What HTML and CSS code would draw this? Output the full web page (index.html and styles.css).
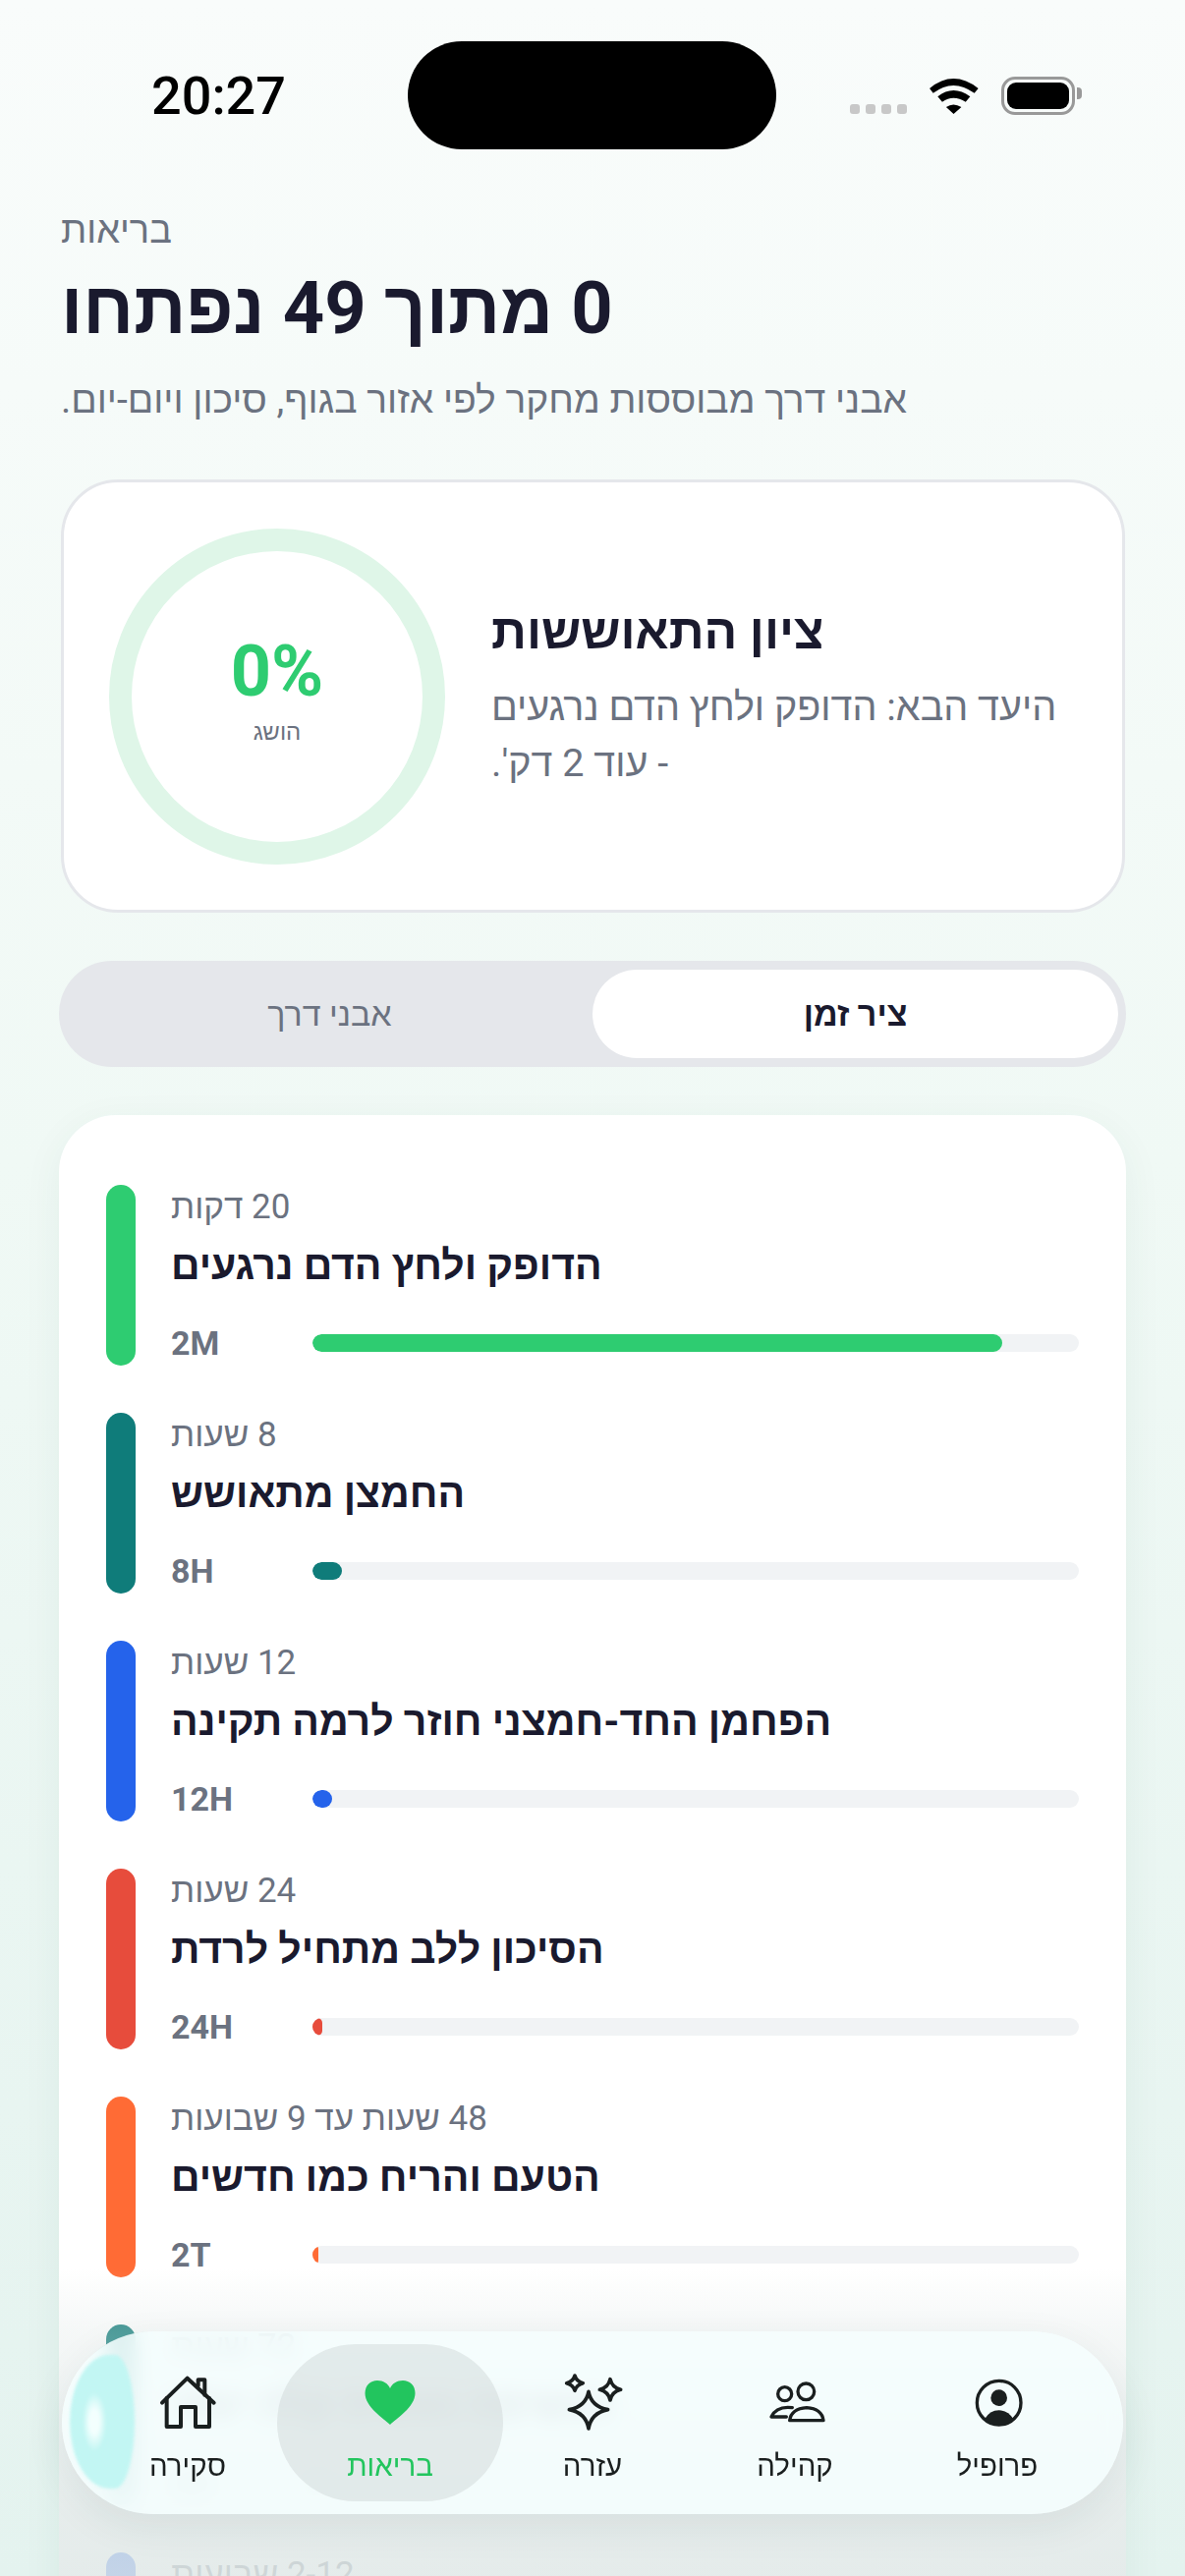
FILE: index.html
```html
<!DOCTYPE html>
<html lang="he" dir="rtl">
<head>
<meta charset="utf-8">
<title>בריאות</title>
<link rel="stylesheet" href="styles.css">
</head>
<body>
<div class="screen">

  <div class="status-bar" dir="ltr">
    <span class="clock">20:27</span>
    <span class="island"></span>
    <span class="status-icons">
      <span class="cell"><i></i><i></i><i></i><i></i></span>
      <svg class="wifi" width="52" height="38" viewBox="285 55 155 115"><path d="M287 88 Q360 28 437 88 L425 103 Q360 55 298 103Z M312 113 Q360 75 412 113 L398 130 Q360 105 326 130Z M338 146 Q360 130 385 146 L361 167Z"/></svg>
      <span class="battery"><b></b></span>
    </span>
  </div>

  <header class="page-head">
    <div class="eyebrow">בריאות</div>
    <h1>0 מתוך 49 נפתחו</h1>
    <p>אבני דרך מבוססות מחקר לפי אזור בגוף, סיכון ויום-יום.</p>
  </header>

  <section class="score-card">
    <div class="score-text">
      <h2>ציון התאוששות</h2>
      <p>היעד הבא: הדופק ולחץ הדם נרגעים - עוד 2 דק'.</p>
    </div>
    <div class="ring">
      <strong>0%</strong>
      <span>הושג</span>
    </div>
  </section>

  <div class="tabs">
    <button class="tab active">ציר זמן</button>
    <button class="tab">אבני דרך</button>
  </div>

  <section class="timeline">
    <div class="item">
      <span class="stripe green"></span>
      <div class="item-body">
        <div class="when">20 דקות</div>
        <div class="what">הדופק ולחץ הדם נרגעים</div>
        <div class="progress-row" dir="ltr">
          <div class="track"><div class="fill green" style="width:90%"></div></div>
          <span class="tag">2M</span>
        </div>
      </div>
    </div>
    <div class="item">
      <span class="stripe teal"></span>
      <div class="item-body">
        <div class="when">8 שעות</div>
        <div class="what">החמצן מתאושש</div>
        <div class="progress-row" dir="ltr">
          <div class="track"><div class="fill teal" style="width:3.8%"></div></div>
          <span class="tag">8H</span>
        </div>
      </div>
    </div>
    <div class="item">
      <span class="stripe blue"></span>
      <div class="item-body">
        <div class="when">12 שעות</div>
        <div class="what">הפחמן החד-חמצני חוזר לרמה תקינה</div>
        <div class="progress-row" dir="ltr">
          <div class="track"><div class="fill blue" style="width:2.6%"></div></div>
          <span class="tag">12H</span>
        </div>
      </div>
    </div>
    <div class="item">
      <span class="stripe red"></span>
      <div class="item-body">
        <div class="when">24 שעות</div>
        <div class="what">הסיכון ללב מתחיל לרדת</div>
        <div class="progress-row" dir="ltr">
          <div class="track"><div class="fill red" style="width:1.3%"></div></div>
          <span class="tag">24H</span>
        </div>
      </div>
    </div>
    <div class="item">
      <span class="stripe orange"></span>
      <div class="item-body">
        <div class="when">48 שעות עד 9 שבועות</div>
        <div class="what">הטעם והריח כמו חדשים</div>
        <div class="progress-row" dir="ltr">
          <div class="track"><div class="fill orange" style="width:0.8%"></div></div>
          <span class="tag">2T</span>
        </div>
      </div>
    </div>
    <div class="item">
      <span class="stripe teal"></span>
      <div class="item-body">
        <div class="when">72 שעות</div>
        <div class="what">הנשימה נעשית קלה יותר</div>
        <div class="progress-row" dir="ltr">
          <div class="track"><div class="fill teal" style="width:0.8%"></div></div>
          <span class="tag">3D</span>
        </div>
      </div>
    </div>
    <div class="item">
      <span class="stripe blue"></span>
      <div class="item-body">
        <div class="when">2-12 שבועות</div>
      </div>
    </div>
  </section>

  <div class="bottom-fade"></div>

  <nav class="tabbar" dir="ltr">
    <span class="glow"></span>
    <a class="nav-item">
      <svg width="84" height="80" viewBox="0 0 252 240" fill="none" stroke="currentColor" stroke-width="12" stroke-linejoin="round" stroke-linecap="round"><path d="M48 122 L125 47 L206 122"/><path d="M62 108 V195 H105 V135 H150 V195 H192 V108"/><path d="M158 70 V52 H178 V98"/></svg>
      <span>סקירה</span>
    </a>
    <a class="nav-item current">
      <svg width="84" height="80" viewBox="0 0 84 80"><path d="M42 63 C36 57 16.500 45 16.500 31 C16.500 23 22 18 29 18 C35 18 40 21 42 26 C44 21 49 18 55 18 C62 18 67.500 23 67.500 31 C67.500 45 48 57 42 63Z" fill="currentColor"/></svg>
      <span>בריאות</span>
    </a>
    <a class="nav-item">
      <svg width="110" height="80" viewBox="-6 15 330 240" fill="none" stroke="currentColor" stroke-width="11" stroke-linejoin="round"><path d="M147 103 Q155 148 206 158 Q155 168 147 216 Q139 168 88 158 Q139 148 147 103Z"/><path d="M105 54 Q110 72 130 77 Q110 82 105 100 Q100 82 80 77 Q100 72 105 54Z"/><path d="M213 65 Q219 91 245 97 Q219 103 213 129 Q207 103 181 97 Q207 91 213 65Z"/></svg>
      <span>עזרה</span>
    </a>
    <a class="nav-item">
      <svg width="82" height="80" viewBox="-7 -15 246 240" fill="none" stroke="currentColor" stroke-width="10" stroke-linejoin="round" stroke-linecap="round"><circle cx="85" cy="80" r="21"/><circle cx="150" cy="73" r="25"/><path d="M108 122 Q60 116 44 150 H90"/><path d="M100 161 Q105 125 152 122 Q198 125 203 161Z"/></svg>
      <span>קהילה</span>
    </a>
    <a class="nav-item">
      <svg width="82" height="80" viewBox="612 -15 246 240"><circle cx="740" cy="107" r="67" fill="none" stroke="currentColor" stroke-width="10"/><circle cx="740" cy="92" r="25" fill="currentColor"/><path d="M695 158 Q712 130 740 130 Q768 130 785 158 Q768 176 740 176 Q712 176 695 158Z" fill="currentColor"/></svg>
      <span>פרופיל</span>
    </a>
  </nav>

</div>
</body>
</html>
```

FILE: styles.css
```css
* {
  box-sizing: border-box;
}
html, body {
  margin: 0;
  padding: 0;
}
body {
  font-family: Roboto, "Liberation Sans", sans-serif;
  color: #1a1a2e;
}
.screen {
  position: relative;
  width: 1206px;
  height: 2622px;
  overflow: hidden;
  padding: 0 60px;
  background: linear-gradient(180deg, #f9fcfb 0%, #f0f9f5 45%, #e4f3ef 100%);
}

/* status bar */
.status-bar {
  display: flex;
  align-items: center;
  height: 110px;
  margin-top: 42px;
  padding-left: 94px;
}
.clock {
  width: 261px;
  font-size: 54px;
  font-weight: 500;
  color: #000;
}
.island {
  width: 375px;
  height: 110px;
  border-radius: 55px;
  background: #000;
}
.status-icons {
  display: flex;
  align-items: flex-end;
  gap: 22px;
  align-self: flex-start;
  margin: 36px 0 0 75px;
}
.cell {
  display: flex;
  gap: 6px;
  margin-bottom: 1px;
}
.cell i {
  width: 10px;
  height: 10px;
  border-radius: 3px;
  background: #c8c8c8;
}
.wifi {
  display: block;
}
.battery {
  position: relative;
  display: block;
  width: 75px;
  height: 39px;
  padding: 3px;
  border: 3px solid #999;
  border-radius: 14px;
}
.battery b {
  display: block;
  height: 100%;
  border-radius: 9px;
  background: #000;
}
.battery::after {
  content: "";
  position: absolute;
  top: 8px;
  right: -10px;
  width: 5px;
  height: 12px;
  border-radius: 0 4px 4px 0;
  background: #999;
}

/* heading */
.page-head {
  padding: 60px 2px 0;
  text-align: left;
}
.eyebrow {
  font-size: 38px;
  line-height: 44px;
  color: #6b7280;
}
h1 {
  margin: 13px 0 0;
  font-size: 74px;
  line-height: 90px;
  font-weight: 700;
  color: #1a1a2e;
}
.page-head p {
  margin: 25px 0 0;
  font-size: 39px;
  line-height: 46px;
  color: #6b7280;
}

/* score card */
.score-card {
  display: flex;
  align-items: center;
  justify-content: space-between;
  height: 441px;
  margin: 58px 1px 0 2px;
  padding: 0 57px 0 46px;
  background: #fff;
  border: 3px solid #e5e7eb;
  border-radius: 58px;
}
.score-text {
  width: 585px;
  text-align: left;
}
.score-text h2 {
  margin: 0;
  font-size: 50px;
  line-height: 60px;
  font-weight: 700;
}
.score-text p {
  margin: 18px 0 0;
  font-size: 39.500px;
  line-height: 57px;
  color: #6b7280;
}
.ring {
  display: flex;
  flex-direction: column;
  align-items: center;
  justify-content: center;
  width: 342px;
  height: 342px;
  flex: none;
  border: 23px solid #dff6e8;
  border-radius: 50%;
  padding-bottom: 12px;
}
.ring strong {
  font-size: 72px;
  line-height: 80px;
  font-weight: 700;
  color: #2ecc71;
}
.ring span {
  margin-top: 4px;
  font-size: 24px;
  line-height: 34px;
  color: #6b7280;
}

/* tabs */
.tabs {
  display: flex;
  height: 108px;
  margin-top: 49px;
  padding: 9px 8px;
  background: #e5e7eb;
  border-radius: 54px;
}
.tab {
  flex: 1;
  border: 0;
  background: none;
  border-radius: 46px;
  font-family: inherit;
  font-size: 34px;
  color: #6b7280;
}
.tab.active {
  background: #fff;
  color: #1a1a2e;
  font-weight: 700;
}

/* timeline card */
.timeline {
  margin-top: 49px;
  padding: 71px 48px 48px;
  background: #fff;
  border-radius: 58px;
  box-shadow: 0 10px 40px rgba(20, 90, 70, 0.06);
}
.item {
  display: flex;
  direction: ltr;
  gap: 36px;
  height: 184px;
  margin-bottom: 48px;
}
.stripe {
  flex: none;
  width: 30px;
  height: 184px;
  border-radius: 15px;
}
.item-body {
  flex: 1;
  direction: rtl;
  min-width: 0;
}
.when {
  text-align: left;
  font-size: 35px;
  line-height: 46px;
  color: #6b7280;
}
.what {
  text-align: left;
  margin-top: 8px;
  font-size: 41px;
  line-height: 56px;
  font-weight: 700;
  color: #1a1a2e;
}
.progress-row {
  display: flex;
  flex-direction: row-reverse;
  align-items: center;
  margin-top: 26px;
  height: 50px;
}
.tag {
  width: 144px;
  font-size: 34px;
  font-weight: 700;
  color: #6b7280;
}
.track {
  flex: 1;
  height: 18px;
  border-radius: 9px;
  background: #f1f3f5;
  overflow: hidden;
}
.fill {
  height: 100%;
  border-radius: 9px;
}
.green { background: #2ecc71; }
.teal { background: #0f7c7a; }
.blue { background: #2563eb; }
.red { background: #e74c3c; }
.orange { background: #ff6b35; }

/* bottom fade + floating bar */
.bottom-fade {
  position: absolute;
  left: 60px;
  right: 60px;
  bottom: 0;
  height: 312px;
  background: linear-gradient(180deg, rgba(224, 232, 231, 0) 0%, rgba(224, 232, 231, 0.3) 19%, rgba(224, 232, 231, 0.8) 80%, rgba(224, 232, 231, 0.85) 100%);
}
.tabbar {
  position: absolute;
  left: 63px;
  top: 2373px;
  width: 1080px;
  height: 186px;
  display: flex;
  align-items: stretch;
  padding: 0 25px;
  border-radius: 93px;
  background: rgba(245, 254, 254, 0.86);
  backdrop-filter: blur(10px);
  box-shadow: 0 12px 40px rgba(30, 60, 60, 0.08);
}
.glow {
  position: absolute;
  left: 8px;
  top: 24px;
  width: 66px;
  height: 136px;
  border-radius: 40px 20px 20px 40px / 68px;
  background: radial-gradient(ellipse 12px 30px at 38% 50%, #f3fffe 40%, #c2f6f3 100%);
  filter: blur(1.500px);
}
.nav-item {
  position: relative;
  flex: 1;
  display: flex;
  flex-direction: column;
  align-items: center;
  justify-content: flex-end;
  gap: 7px;
  padding-bottom: 31px;
  font-size: 29.500px;
  line-height: 36px;
  color: #1a1f1f;
}
.nav-item svg {
  display: block;
  flex: none;
}
.nav-item.current {
  color: #22c55e;
}
.nav-item.current::before {
  content: "";
  position: absolute;
  left: -12px;
  right: -12px;
  top: 13px;
  bottom: 13px;
  border-radius: 80px;
  background: rgba(205, 210, 210, 0.45);
}
.nav-item.current svg,
.nav-item.current span {
  position: relative;
}
```
